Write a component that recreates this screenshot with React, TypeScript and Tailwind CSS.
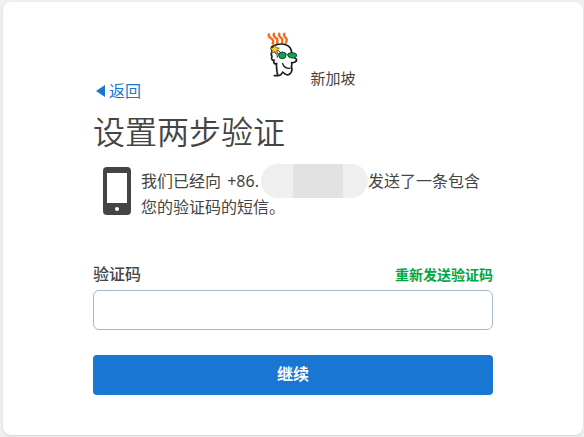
import { useState } from "react";

function Logo() {
  return (
    <svg viewBox="27 15 114 150" className="mb-1.5 h-[50px] w-[38px] shrink-0" fill="none" aria-hidden="true">
      <g stroke="#f36c1f" strokeWidth="7" strokeLinecap="round" strokeLinejoin="round">
        <path d="M42 28c-3 6 1 9 6 12 6 4 9 9 5 16" />
        <path d="M57 26c-4 7 1 9 6 13 5 4 6 9 3 15" />
        <path d="M73 26c-4 7 1 9 6 13 4 4 4 9 2 13" />
        <path d="M88 26c-4 6 1 9 5 13 3 4 3 9 0 14" />
      </g>
      <g stroke="#1c1c1c" strokeWidth="5" strokeLinecap="round" strokeLinejoin="round">
        <path d="M50 66c10-8 32-12 44-6 10 4 15 12 16 22" />
        <path d="M52 66c-3 5-3 9 0 13-4 5-4 11-1 16-4 7 1 13 7 10-5 5-1 13 7 11" />
        <path d="M58 81c7 5 10 9 9 16M68 76c5 2 8 5 10 9" strokeWidth="3" />
        <path d="M64 116c1 10 0 24 5 36M58 152h10c8 0 12-4 15-11 7 8 18 13 25 2 4-6 3-13 1-18 2-4 2-7 1-12 7 1 14-3 15-8 0-4-3-5-6-6" />
        <path d="M83 115c2 11 10 15 22 15" strokeWidth="4" />
      </g>
      <path
        d="m59 60 4 8 10 1-7 7 2 9-9-5-9 5 2-9-7-7 10-1z"
        fill="#ffc928"
        stroke="#493b18"
        strokeWidth="2"
      />
      <g fill="#08a84f" stroke="#123d24" strokeWidth="3">
        <path d="M67 87h28" />
        <ellipse cx="82" cy="91" rx="11" ry="10" />
        <path d="M98 87c6-5 20-5 26 0 3 8-3 12-12 12s-14-4-14-12z" />
      </g>
    </svg>
  );
}

function PhoneIcon() {
  return (
    <svg viewBox="0 0 28 48" className="h-12 w-7 shrink-0" aria-hidden="true">
      <rect width="28" height="48" rx="4" fill="#444" />
      <path d="M4 6h20v30H4z" fill="#fff" />
      <circle cx="14" cy="42" r="2" fill="#fff" />
    </svg>
  );
}

export default function App() {
  const [code, setCode] = useState("");

  return (
    <div className="bg-[#eff0f2] pt-0.5 pr-px pb-0.5 pl-[3px] font-['Noto_Sans','Noto_Sans_CJK_SC',sans-serif] text-[#444]">
      <main className="rounded-lg bg-white px-[90px] pt-7 pb-10 shadow-sm">
        <header className="-mb-2 flex items-end justify-center gap-2 pl-[34px]">
          <Logo />
          <span className="text-[15px] leading-4">新加坡</span>
        </header>

        <a href="#back" className="flex w-fit items-center gap-1 pl-[3px] text-base leading-[26px] text-[#1976d2]">
          <svg viewBox="0 0 9 12" className="h-3 w-[9px]" aria-hidden="true">
            <path d="M9 0v12L0 6z" fill="currentColor" />
          </svg>
          返回
        </a>
        <h1 className="mt-1 text-[32px] leading-[47px] font-[350]">设置两步验证</h1>

        <div className="mt-3 flex gap-2.5 pl-2.5">
          <PhoneIcon />
          <p className="pt-px text-base leading-[26px]">
            我们已经向 <span className="mx-0.5">+86.</span>
            <span className="-mt-2.5 -mb-1.5 inline-flex h-[34px] w-[107px] overflow-hidden rounded-full bg-[#efefef] align-middle">
              <span className="ml-8 w-[50px] bg-[#e2e2e2]" />
            </span>
            发送了一条包含
            <br />
            您的验证码的短信。
          </p>
        </div>

        <form onSubmit={(e) => e.preventDefault()} className="mt-[42px]">
          <div className="flex items-baseline justify-between">
            <label htmlFor="code" className="text-base leading-6 font-medium">
              验证码
            </label>
            <a href="#resend" className="text-sm leading-6 font-bold text-[#00a63f]">
              重新发送验证码
            </a>
          </div>
          <input
            id="code"
            type="text"
            value={code}
            onChange={(e) => setCode(e.target.value)}
            className="mt-[3px] block h-10 w-full rounded-md border border-[#a9b8c4] px-3 outline-none"
          />
          <button type="submit" className="mt-[25px] h-10 w-full rounded bg-[#1976d2] pb-0.5 text-base font-bold text-white">
            继续
          </button>
        </form>
      </main>
    </div>
  );
}
